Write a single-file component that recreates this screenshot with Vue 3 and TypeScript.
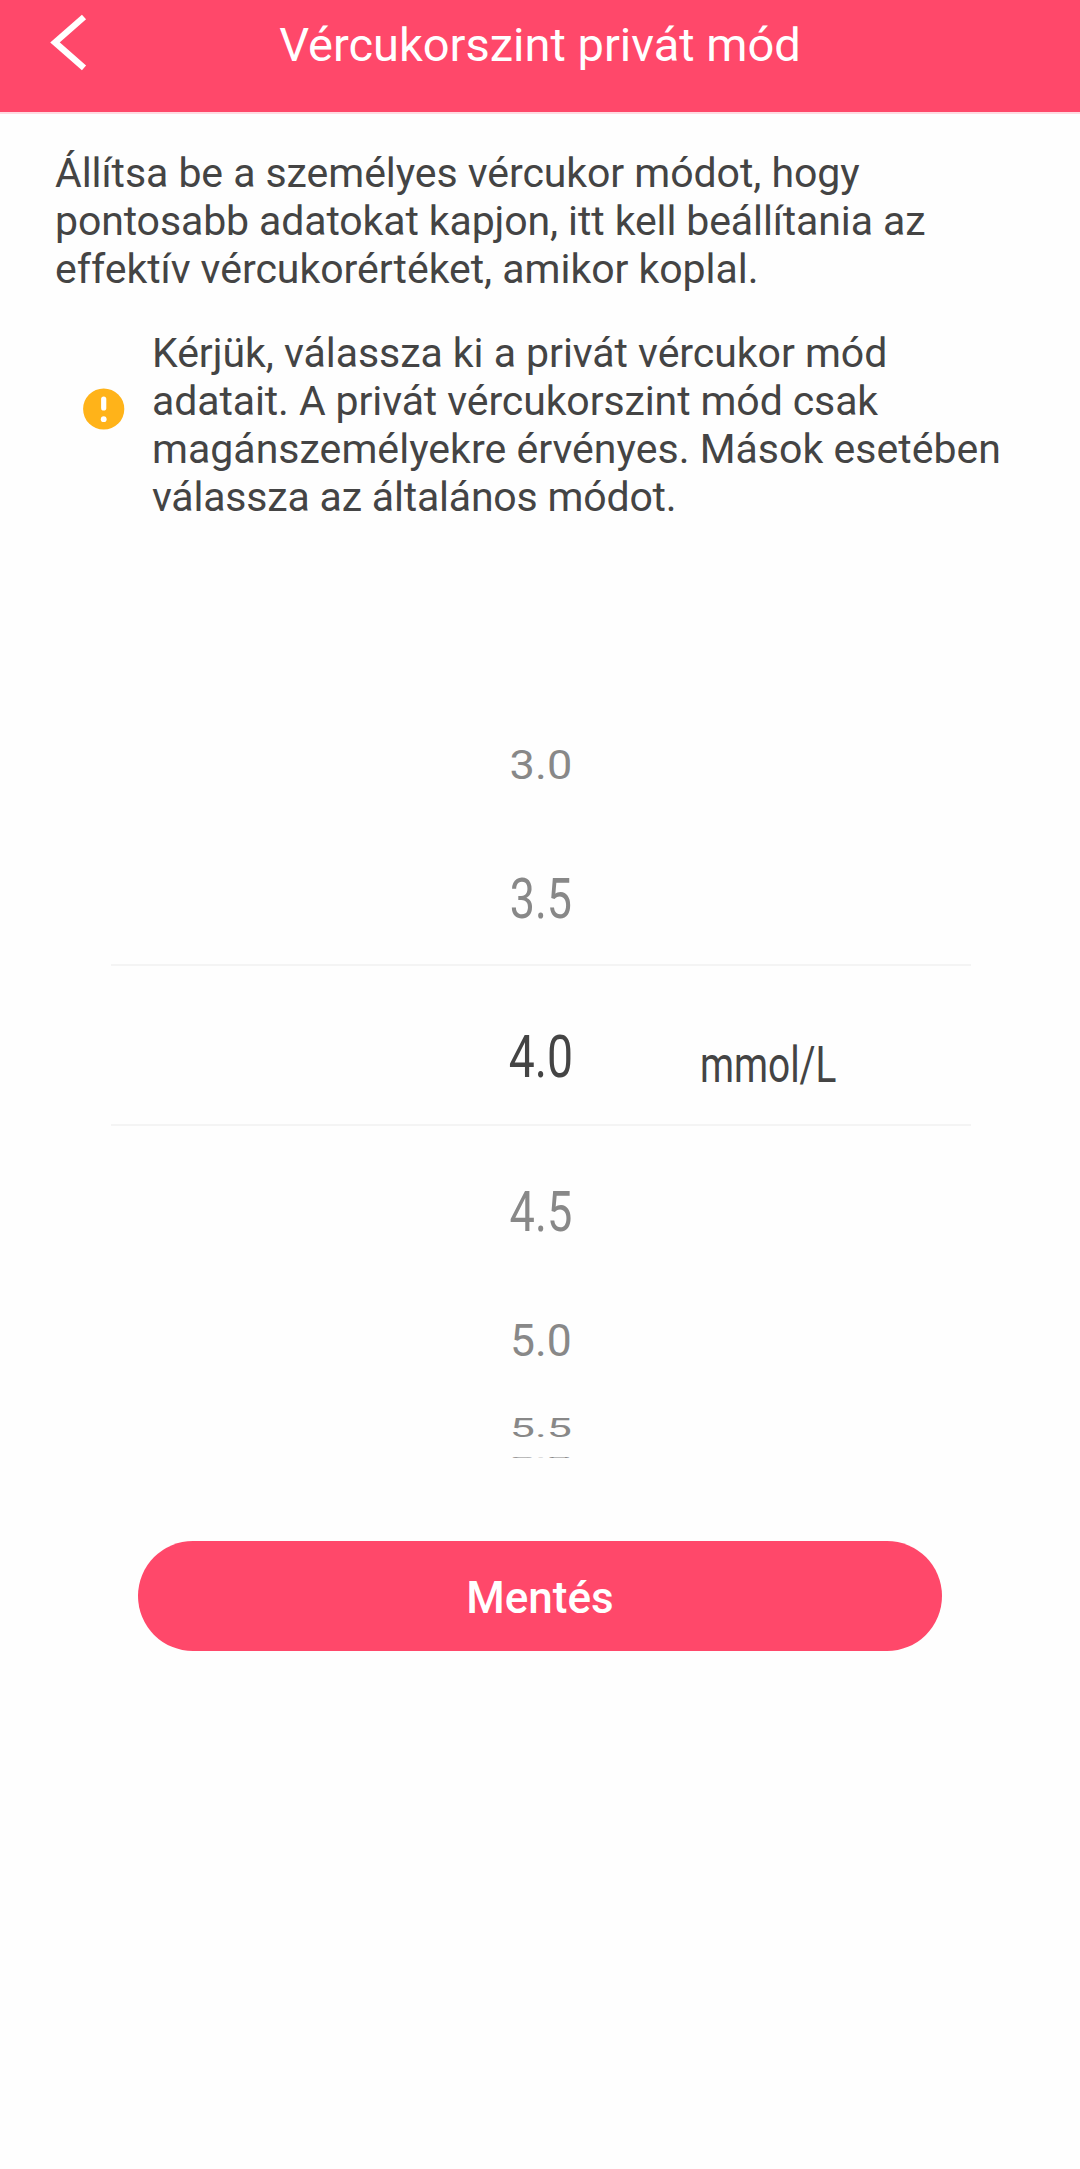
<script setup lang="ts">
interface TextLine {
  text: string
  tracking: number
}

interface PickerRow {
  value: string
  height: number
  gap: number
  scaleX: number
  scaleY: number
  selected?: boolean
}

const intro: TextLine[] = [
  { text: 'Állítsa be a személyes vércukor módot, hogy', tracking: -0.06 },
  { text: 'pontosabb adatokat kapjon, itt kell beállítania az', tracking: -0.11 },
  { text: 'effektív vércukorértéket, amikor koplal.', tracking: -0.03 },
]

const notice: TextLine[] = [
  { text: 'Kérjük, válassza ki a privát vércukor mód', tracking: -0.04 },
  { text: 'adatait. A privát vércukorszint mód csak', tracking: -0.1 },
  { text: 'magánszemélyekre érvényes. Mások esetében', tracking: 0.03 },
  { text: 'válassza az általános módot.', tracking: -0.19 },
]

// The wheel flattens its rows towards both ends.
const rows: PickerRow[] = [
  { value: '3.0', height: 64, gap: 36, scaleX: 0.765, scaleY: 0.7 },
  { value: '3.5', height: 132, gap: 0, scaleX: 0.76, scaleY: 0.93 },
  { value: '4.0', height: 162, gap: 0, scaleX: 0.785, scaleY: 1, selected: true },
  { value: '4.5', height: 170, gap: 0, scaleX: 0.765, scaleY: 0.94 },
  { value: '5.0', height: 89, gap: 14, scaleX: 0.755, scaleY: 0.76 },
  { value: '5.5', height: 56, gap: 0, scaleX: 0.76, scaleY: 0.43 },
  { value: '6.0', height: 3, gap: 0, scaleX: 0.76, scaleY: 0.04 },
]
</script>

<template>
  <div class="screen">
    <header class="bar">
      <svg class="back" width="40" height="60" viewBox="0 0 40 60">
        <path d="M36 4 L7 29.4 L36 54.8" fill="none" stroke="#fff" stroke-width="6.3" />
      </svg>
      <h1 class="title">Vércukorszint privát mód</h1>
    </header>

    <p class="intro">
      <span
        v-for="line in intro"
        :key="line.text"
        class="line"
        :style="{ letterSpacing: line.tracking + 'px' }"
      >{{ line.text }}</span>
    </p>

    <section class="notice">
      <svg class="alert" width="42" height="42" viewBox="0 0 42 42">
        <circle cx="20.7" cy="21" r="20.6" fill="#ffb319" />
        <path d="M20.7 11V20" stroke="#fff" stroke-width="5.2" stroke-linecap="round" />
        <circle cx="20.7" cy="31.2" r="2.9" fill="#fff" />
      </svg>
      <p class="notice-text">
        <span
          v-for="line in notice"
          :key="line.text"
          class="line"
          :style="{ letterSpacing: line.tracking + 'px' }"
        >{{ line.text }}</span>
      </p>
    </section>

    <section class="picker">
      <div
        v-for="row in rows"
        :key="row.value"
        class="row"
        :class="{ selected: row.selected }"
        :style="{ height: row.height + 'px', marginBottom: row.gap + 'px' }"
      >
        <span class="value" :style="{ transform: `scale(${row.scaleX}, ${row.scaleY})` }">{{ row.value }}</span>
        <span v-if="row.selected" class="unit">mmol/L</span>
      </div>
    </section>

    <button class="save" type="button">Mentés</button>
  </div>
</template>

<style>
body {
  margin: 0;
  background: #fefefe;
}
</style>

<style scoped>
.screen {
  display: flex;
  flex-direction: column;
  width: 1080px;
  height: 2169px;
  overflow: hidden;
  background: #fefefe;
  color: #444;
  font-family: Roboto, sans-serif;
}
.bar {
  display: grid;
  grid-template-columns: 140px 1fr 140px;
  flex: none;
  height: 112px;
  background: #ff486a;
  border-bottom: 2px solid #ffdbe2;
  box-sizing: content-box;
}
.back {
  margin: 13px 0 0 48px;
}
.title {
  margin: 0;
  padding-top: 16px;
  color: #fff;
  font-size: 47px;
  font-weight: 400;
  line-height: 58px;
  text-align: center;
  white-space: nowrap;
}
.intro {
  margin: 35px 0 0 55px;
}
.line {
  display: block;
  height: 48px;
  font-size: 41px;
  line-height: 48px;
  white-space: nowrap;
}
.notice {
  display: flex;
  align-items: center;
  margin: 36px 0 0 83px;
}
.alert {
  flex: none;
  margin-top: -33px;
}
.notice-text {
  margin: 0 0 0 27px;
}
.picker {
  flex: none;
  height: 726px;
  margin: 211px 109px 0 111px;
}
.row {
  display: grid;
  grid-template-columns: 1fr 100px 1fr;
  align-items: center;
  justify-items: center;
  box-sizing: border-box;
  color: #888;
}
.row.selected {
  padding-top: 22px;
  border-top: 2px solid #f4f4f4;
  border-bottom: 2px solid #f4f4f4;
  color: #444;
}
.value {
  grid-column: 2;
  font-size: 59px;
  line-height: 70px;
  margin: -34px 0 -35px;
}
.unit {
  grid-column: 3;
  justify-self: start;
  margin: 17px 0 0 109px;
  font-size: 50px;
  line-height: 60px;
  transform: scaleX(0.776);
  transform-origin: left center;
}
.save {
  flex: none;
  width: 804px;
  height: 110px;
  margin: 83px 0 0 138px;
  padding: 4px 0 0;
  border: 0;
  border-radius: 55px;
  background: #ff486a;
  color: #fff;
  font: 500 44px/60px Roboto, sans-serif;
}
</style>
